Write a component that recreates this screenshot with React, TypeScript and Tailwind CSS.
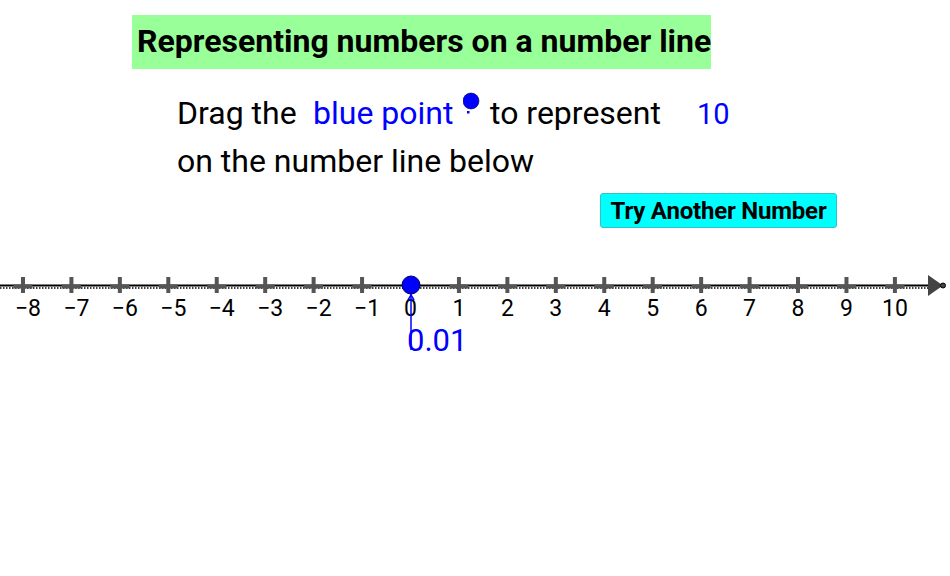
import React from "react";

const ticks = Array.from({ length: 19 }, (_, k) => k - 8);
const X0 = 410.5;
const STEP = 48.44;
const OY = 265;

export default function App() {
  return (
    <div
      className="w-[950px] h-[576px] bg-white overflow-hidden text-black"
      style={{ fontFamily: "Roboto, 'Noto Sans', sans-serif" }}
    >
      <div className="pt-[15px] pl-[132px]">
        <div className="w-[579px] h-[54px] bg-[#99ff99] flex items-center pl-[5px] pb-[2px] text-[32px] font-bold whitespace-nowrap">
          Representing numbers on a number line
        </div>
      </div>

      <div className="mt-[21px] pl-[177px] text-[32px] leading-[47px] whitespace-nowrap">
        <div className="flex items-baseline">
          <span className="w-[136px] shrink-0">Drag the</span>
          <span className="w-[150px] shrink-0 text-[#0000ff]">blue point</span>
          <span className="w-[27px] shrink-0 relative self-stretch">
            <svg width="27" height="47" className="absolute left-0 top-0">
              <circle cx="8" cy="11" r="8" fill="#0000ff" stroke="#000060" strokeWidth="0.6" />
              <rect x="4" y="21" width="2.5" height="2.5" fill="#0000ff" />
            </svg>
          </span>
          <span className="w-[207px] shrink-0">to represent</span>
          <span className="text-[#0000ff] text-[29px]">10</span>
        </div>
        <div>on the number line below</div>
      </div>

      <div className="mt-[8px] pl-[600px]">
        <div className="w-[237px] h-[35px] bg-[#00ffff] border border-[#2fc4c4] rounded-[3px] flex items-center justify-center text-[24px] font-bold tracking-[-0.2px] whitespace-nowrap">
          Try Another Number
        </div>
      </div>

      <svg width="950" height="100" className="mt-[37px] block">
        <line x1="0" y1={285.5 - OY} x2="932" y2={285.5 - OY} stroke="#000" strokeWidth="2" />
        <line
          x1="0"
          y1={288 - OY}
          x2="932"
          y2={288 - OY}
          stroke="#000"
          strokeWidth="1.5"
          strokeDasharray="1.5 1.5"
        />
        {ticks.map((i) => {
          const x = X0 + i * STEP;
          return (
            <g key={i}>
              {i !== 0 && (
                <>
                  <rect x={x - 2} y={277 - OY} width="4" height="16" fill="#555" />
                  <rect x={x - 9.5} y={284.5 - OY} width="19" height="4" fill="#555" />
                </>
              )}
              <text
                x={i < 0 ? x + 5 : x}
                y={315.5 - OY}
                textAnchor="middle"
                fontSize="23"
                fill="#000"
                style={{ fontFamily: "Roboto, sans-serif" }}
              >
                {i < 0 ? "\u2212" + -i : String(i)}
              </text>
            </g>
          );
        })}
        <polygon points={`928,${275 - OY} 943,${285.5 - OY} 928,${296 - OY}`} fill="#444" />
        <circle cx="943" cy={285.5 - OY} r="2.5" fill="#444" stroke="#000" strokeWidth="1" />

        <line x1="411" y1={292 - OY} x2="411" y2={350 - OY} stroke="#0000ff" strokeWidth="1.5" />
        <polyline
          points={`408,${300 - OY} 411,${295 - OY} 414,${300 - OY}`}
          fill="none"
          stroke="#0000ff"
          strokeWidth="1.5"
        />
        <circle cx="411" cy={285 - OY} r="9" fill="#0000ff" stroke="#00006a" strokeWidth="1" />
        <text
          x="407"
          y={351 - OY}
          fontSize="31"
          fill="#0000ff"
          style={{ fontFamily: "Roboto, sans-serif" }}
        >
          0.01
        </text>
      </svg>
    </div>
  );
}
